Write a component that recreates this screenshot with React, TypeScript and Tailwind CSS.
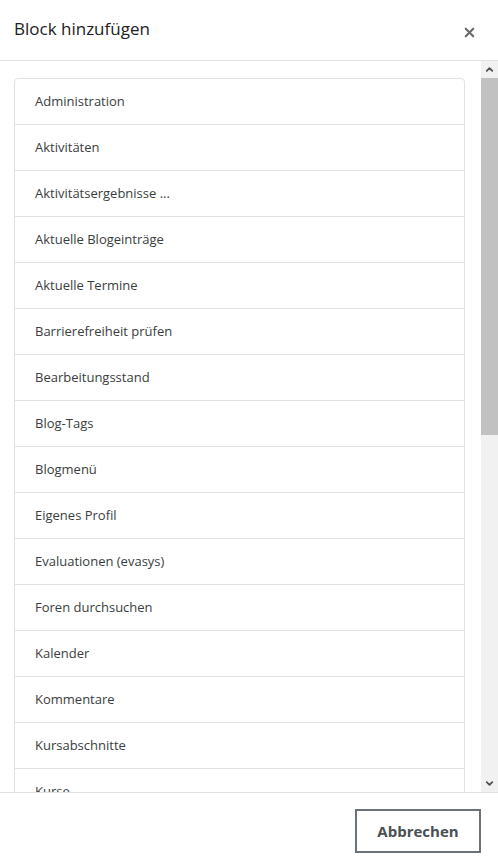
import { ChevronDown, ChevronUp, X } from "lucide-react";

const blocks = [
  "Administration",
  "Aktivitäten",
  "Aktivitätsergebnisse ...",
  "Aktuelle Blogeinträge",
  "Aktuelle Termine",
  "Barrierefreiheit prüfen",
  "Bearbeitungsstand",
  "Blog-Tags",
  "Blogmenü",
  "Eigenes Profil",
  "Evaluationen (evasys)",
  "Foren durchsuchen",
  "Kalender",
  "Kommentare",
  "Kursabschnitte",
  "Kurse",
  "Lernpläne",
];

const App = () => {
  return (
    <main
      className="flex h-[864px] flex-col overflow-hidden bg-white text-[#1d2125]"
      style={{ fontFamily: '"Open Sans", "Noto Sans", sans-serif' }}
    >
      {/* Header */}
      <header className="flex h-[61px] shrink-0 items-center justify-between border-b border-[#dee2e6] pl-[14px] pr-[21px]">
        <h1 className="pb-[3px] text-[17px] leading-none text-[#1d2125]">Block hinzufügen</h1>
        <X className="mt-[4px] h-[15px] w-[15px] text-[#6a6a6a]" strokeWidth={3.4} />
      </header>

      {/* Body */}
      <div className="flex min-h-0 flex-1">
        <div className="min-w-0 flex-1 overflow-hidden pl-[14px] pr-[16px] pt-[17px]">
          <ul className="rounded-[4px] border border-[#dee2e6]">
            {blocks.map((b) => (
              <li
                key={b}
                className="flex h-[46px] items-center border-b border-[#dee2e6] px-[20px] pt-px text-[13px] text-[#3a3d40] last:border-b-0"
              >
                {b}
              </li>
            ))}
          </ul>
        </div>

        {/* Scrollbar */}
        <div className="flex w-[17px] shrink-0 flex-col bg-[#f1f1f1]">
          <div className="flex h-[17px] items-center justify-center">
            <ChevronUp className="h-[11px] w-[11px] text-[#505050]" strokeWidth={4} />
          </div>
          <div className="h-[357px] bg-[#c1c1c1]" />
          <div className="flex-1" />
          <div className="flex h-[17px] items-center justify-center">
            <ChevronDown className="h-[11px] w-[11px] text-[#505050]" strokeWidth={4} />
          </div>
        </div>
      </div>

      {/* Footer */}
      <footer className="flex h-[72px] shrink-0 items-start justify-end border-t border-[#dee2e6] pr-[17px] pt-[16px]">
        <button className="h-[44px] w-[126px] border-2 border-[#6a737b] bg-white text-[15px] font-bold text-[#4a4f54]">
          Abbrechen
        </button>
      </footer>
    </main>
  );
};

export default App;
